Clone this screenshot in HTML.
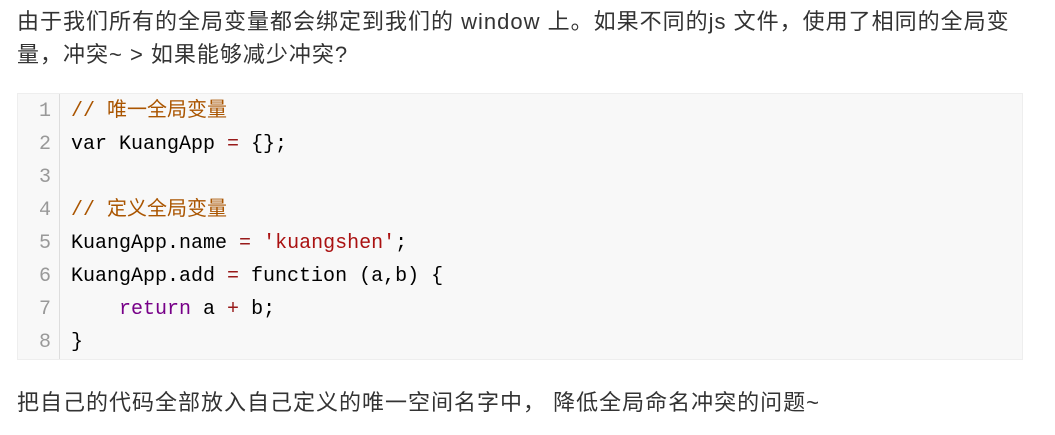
<!DOCTYPE html>
<html><head><meta charset="utf-8"><style>
body{margin:0;background:#fff;width:1055px;height:435px;overflow:hidden;font-family:"Liberation Sans","Noto Sans CJK SC",sans-serif;color:#333;}
p{position:absolute;left:17px;margin:0;font-size:22px;line-height:33px;white-space:nowrap;letter-spacing:1px;}
.code{position:absolute;left:17px;top:93px;width:1006px;height:267px;background:#f8f8f8;border:1px solid #eee;box-sizing:border-box;}
.gut{position:absolute;left:0;top:0;width:41px;height:100%;border-right:1px solid #ddd;}
.ln{position:absolute;right:8px;width:30px;text-align:right;color:#999;font:20px/33px "Liberation Mono",monospace;}
.line{position:absolute;left:53px;font:20px/33px "Liberation Mono","Noto Sans CJK SC",monospace;color:#000;white-space:pre;}
.c{color:#aa5500}.s{color:#aa1111}.k{color:#770088}.o{color:#981a1a}
</style></head><body>
<p style="top:5px">由于我们所有的全局变量都会绑定到我们的 window 上。如果不同的js 文件，使用了相同的全局变</p>
<p style="top:38px">量，冲突~ &gt; 如果能够减少冲突?</p>
<div class="code">
<div class="gut">
<div class="ln" style="top:1px">1</div><div class="ln" style="top:34px">2</div><div class="ln" style="top:67px">3</div><div class="ln" style="top:100px">4</div><div class="ln" style="top:133px">5</div><div class="ln" style="top:166px">6</div><div class="ln" style="top:199px">7</div><div class="ln" style="top:232px">8</div>
</div>
<div class="line c" style="top:1px">// 唯一全局变量</div>
<div class="line" style="top:34px">var KuangApp <span class="o">=</span> {};</div>
<div class="line c" style="top:100px">// 定义全局变量</div>
<div class="line" style="top:133px">KuangApp.name <span class="o">=</span> <span class="s">'kuangshen'</span>;</div>
<div class="line" style="top:166px">KuangApp.add <span class="o">=</span> function (a,b) {</div>
<div class="line" style="top:199px">    <span class="k">return</span> a <span class="o">+</span> b;</div>
<div class="line" style="top:232px">}</div>
</div>
<p style="top:386px">把自己的代码全部放入自己定义的唯一空间名字中， 降低全局命名冲突的问题~</p>
</body></html>
